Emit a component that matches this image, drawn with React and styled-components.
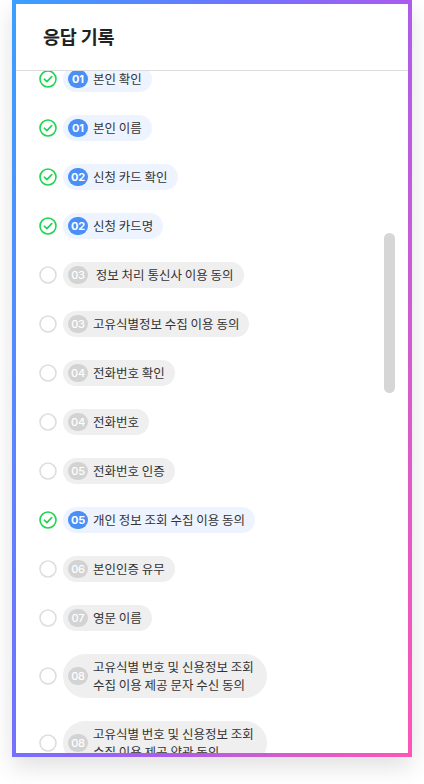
import React, { useLayoutEffect, useRef } from 'react'
import styled, { createGlobalStyle } from 'styled-components'

const GlobalStyle = createGlobalStyle`
  html, body {
    margin: 0;
    padding: 0;
    background: #ffffff;
  }
  body {
    font-family: "Noto Sans CJK KR", "Noto Sans", sans-serif;
    color: #333;
  }
`

const Page = styled.div`
  padding: 0 12px;
  height: 784px;
  box-sizing: border-box;
  overflow: hidden;
`

const Frame = styled.div`
  width: 400px;
  height: 757px;
  box-sizing: border-box;
  padding: 4px;
  background: linear-gradient(108deg, #3aa0ff 0%, #6f73ff 36%, #a85cf0 60%, #d45ccc 80%, #ff55b5 100%);
  box-shadow: 0 10px 22px rgba(0, 0, 0, 0.12);
`

const Panel = styled.div`
  position: relative;
  display: flex;
  flex-direction: column;
  height: 100%;
  background: #ffffff;
  overflow: hidden;
`

const Header = styled.div`
  flex: none;
  display: flex;
  align-items: center;
  height: 67px;
  box-sizing: border-box;
  padding: 0 0 2px 27px;
  border-bottom: 1px solid #dcdcdc;
`

const Title = styled.h1`
  margin: 0;
  font-size: 18.5px;
  font-weight: 700;
  color: #222;
  letter-spacing: -0.2px;
`

const Scroller = styled.div`
  flex: 1;
  min-height: 0;
  overflow-y: auto;
  scrollbar-width: none;
  &::-webkit-scrollbar {
    display: none;
  }
`

const List = styled.ul`
  list-style: none;
  margin: 0;
  padding: 20px 0 40px 23px;
  display: flex;
  flex-direction: column;
  gap: 23px;
`

const Row = styled.li`
  display: flex;
  align-items: center;
  gap: 6px;
`

const Pill = styled.div`
  display: flex;
  align-items: center;
  gap: 5px;
  min-height: 26px;
  box-sizing: border-box;
  padding: 4px 10px 4px 5px;
  border-radius: 22px;
  background: ${p => (p.$done ? '#eef4ff' : '#efefef')};
`

const Badge = styled.span`
  flex: none;
  display: flex;
  align-items: center;
  justify-content: center;
  width: 20px;
  height: 18px;
  border-radius: 10px;
  background: ${p => (p.$done ? '#4a8ff5' : '#d3d3d3')};
  color: #ffffff;
  font-family: "Inter", "Noto Sans", sans-serif;
  font-size: 11px;
  font-weight: ${p => (p.$done ? 700 : 500)};
  letter-spacing: -0.2px;
`

const Label = styled.span`
  max-width: 164px;
  font-size: 12.5px;
  line-height: 18px;
  color: #333;
  white-space: pre-wrap;
  word-break: keep-all;
`

const ScrollThumb = styled.div`
  position: absolute;
  top: 229px;
  right: 13px;
  width: 11px;
  height: 160px;
  border-radius: 6px;
  background: #d6d6d6;
`

const CheckIcon = ({ done }) => (
  <svg width="18" height="18" viewBox="0 0 18 18" fill="none">
    <circle cx="9" cy="9" r="8" stroke={done ? '#1fd552' : '#dedede'} strokeWidth="1.6" />
    {done && (
      <path d="M5.3 9.2 L7.9 11.6 L12.7 6.6" stroke="#1fd552" strokeWidth="1.6" strokeLinecap="round" strokeLinejoin="round" />
    )}
  </svg>
)

const items = [
  { no: '01', label: '본인 확인', done: true },
  { no: '01', label: '본인 이름', done: true },
  { no: '02', label: '신청 카드 확인', done: true },
  { no: '02', label: '신청 카드명', done: true },
  { no: '03', label: ' 정보 처리 통신사 이용 동의', done: false },
  { no: '03', label: '고유식별정보 수집 이용 동의', done: false },
  { no: '04', label: '전화번호 확인', done: false },
  { no: '04', label: '전화번호', done: false },
  { no: '05', label: '전화번호 인증', done: false },
  { no: '05', label: '개인 정보 조회 수집 이용 동의', done: true },
  { no: '06', label: '본인인증 유무', done: false },
  { no: '07', label: '영문 이름', done: false },
  { no: '08', label: '고유식별 번호 및 신용정보 조회 수집 이용 제공 문자 수신 동의', done: false },
  { no: '08', label: '고유식별 번호 및 신용정보 조회 수집 이용 제공 약관 동의', done: false },
  { no: '09', label: '카드 수령 주소', done: false },
]

const App = () => {
  const scrollRef = useRef(null)

  useLayoutEffect(() => {
    if (scrollRef.current) scrollRef.current.scrollTop = 25
  }, [])

  return (
    <Page>
      <GlobalStyle />
      <Frame>
        <Panel>
          <Header>
            <Title>응답 기록</Title>
          </Header>
          <Scroller ref={scrollRef}>
            <List>
              {items.map((item, i) => (
                <Row key={i}>
                  <CheckIcon done={item.done} />
                  <Pill $done={item.done}>
                    <Badge $done={item.done}>{item.no}</Badge>
                    <Label>{item.label}</Label>
                  </Pill>
                </Row>
              ))}
            </List>
          </Scroller>
          <ScrollThumb />
        </Panel>
      </Frame>
    </Page>
  )
}

export default App
